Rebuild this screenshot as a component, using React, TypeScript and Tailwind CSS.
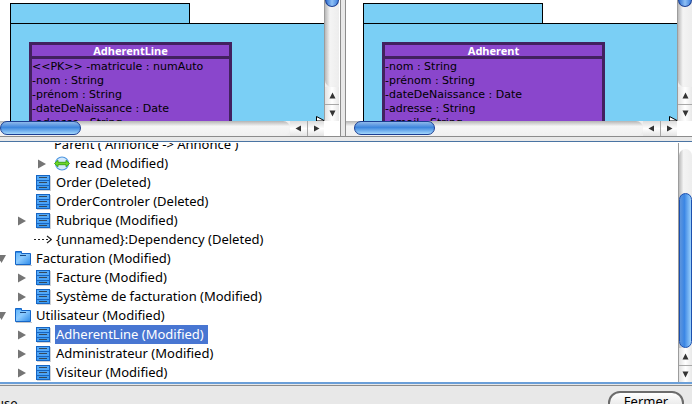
import React from "react";

type IconKind = "class" | "package" | "association" | "dependency";

interface TreeItem {
  label: string;
  level: number;
  icon?: IconKind;
  toggle?: "open" | "closed";
  selected?: boolean;
}

interface Diagram {
  name: string;
  boxWidth: string;
  attributes: string[];
  hTrack: string;
  offset: string;
}

const diagrams: Diagram[] = [
  {
    name: "AdherentLine",
    boxWidth: "w-[203px]",
    attributes: [
      "<<PK>> -matricule : numAuto",
      "-nom : String",
      "-prénom : String",
      "-dateDeNaissance : Date",
      "-adresse : String",
    ],
    hTrack: "pl-0",
    offset: "pl-[10px]",
  },
  {
    name: "Adherent",
    boxWidth: "w-[223px]",
    attributes: [
      "-nom : String",
      "-prénom : String",
      "-dateDeNaissance : Date",
      "-adresse : String",
      "-email : String",
    ],
    hTrack: "pl-2",
    offset: "pl-[17px]",
  },
];

const tree: TreeItem[] = [
  { label: "Parent ( Annonce -> Annonce )", level: 2 },
  { label: "read (Modified)", level: 2, icon: "association", toggle: "closed" },
  { label: "Order (Deleted)", level: 1, icon: "class" },
  { label: "OrderControler (Deleted)", level: 1, icon: "class" },
  { label: "Rubrique (Modified)", level: 1, icon: "class", toggle: "closed" },
  { label: "{unnamed}:Dependency (Deleted)", level: 1, icon: "dependency" },
  { label: "Facturation (Modified)", level: 0, icon: "package", toggle: "open" },
  { label: "Facture (Modified)", level: 1, icon: "class", toggle: "closed" },
  { label: "Système de facturation (Modified)", level: 1, icon: "class", toggle: "closed" },
  { label: "Utilisateur (Modified)", level: 0, icon: "package", toggle: "open" },
  { label: "AdherentLine (Modified)", level: 1, icon: "class", toggle: "closed", selected: true },
  { label: "Administrateur (Modified)", level: 1, icon: "class", toggle: "closed" },
  { label: "Visiteur (Modified)", level: 1, icon: "class", toggle: "closed" },
];

// left padding + width of the disclosure slot, per level
const levelPad = ["pl-0", "pl-4", "pl-9"];
const toggleWidth = ["w-[15px]", "w-5", "w-[18px]"];

function ClassIcon() {
  return (
    <svg width="15" height="16" viewBox="0 0 15 16" shapeRendering="crispEdges">
      <rect x="1" y="1" width="14" height="15" fill="#cfd2d6" />
      <rect x="0" y="0" width="14" height="15" fill="#1565c4" />
      <rect x="1" y="1" width="12" height="4" fill="#55aaf8" />
      <rect x="1" y="6" width="12" height="4" fill="#4da4f6" />
      <rect x="1" y="11" width="12" height="3" fill="#3f9cf2" />
      <rect x="3" y="2" width="8" height="1" fill="#36495c" />
      <rect x="3" y="7" width="8" height="1" fill="#36495c" />
      <rect x="3" y="12" width="8" height="1" fill="#36495c" />
    </svg>
  );
}

function PackageIcon() {
  return (
    <svg width="17" height="15" viewBox="0 0 17 15">
      <defs>
        <linearGradient id="pkg" x1="0" y1="0" x2="1" y2="1">
          <stop offset="0" stopColor="#5fb4fb" />
          <stop offset="0.45" stopColor="#8ccbff" />
          <stop offset="1" stopColor="#2f8be8" />
        </linearGradient>
      </defs>
      <path d="M1 14.5h16" stroke="#c4c8cc" />
      <path d="M0.5 13.5v-13h6v2h9v11z" fill="url(#pkg)" stroke="#1566c8" />
      <path d="M1 1.5h5" stroke="#2f8be8" />
      <path d="M5 4.5h6" stroke="#1d4a80" />
    </svg>
  );
}

function AssociationIcon() {
  return (
    <svg width="16" height="15" viewBox="0 0 16 15">
      <circle cx="8" cy="7.5" r="6.5" fill="#d4e9fb" stroke="#4f97e0" strokeWidth="1.2" />
      <path
        d="M0.500 7.500L4 4.300V6.300H12V4.300L15.500 7.500L12 10.700V8.700H4V10.700Z"
        fill="#6fd62a"
        stroke="#35a012"
        strokeWidth="0.9"
      />
    </svg>
  );
}

function DependencyIcon() {
  return (
    <svg width="18" height="9" viewBox="0 0 18 9">
      <path d="M0 4.5h17" stroke="#222" strokeDasharray="2 2" />
      <path d="M13 1l4.500 3.500L13 8" fill="none" stroke="#222" strokeWidth="1.200" />
    </svg>
  );
}

function TreeIcon({ kind }: { kind: IconKind }) {
  if (kind === "class") return <ClassIcon />;
  if (kind === "package") return <PackageIcon />;
  if (kind === "association") return <AssociationIcon />;
  return <DependencyIcon />;
}

function Arrow({ dir }: { dir: "up" | "down" | "left" | "right" }) {
  const paths = {
    up: "M4.500 1.500L7.500 7.500H1.500Z",
    down: "M4.500 7.500L7.500 1.500H1.500Z",
    left: "M1.500 4.500L7 1.500V7.500Z",
    right: "M7.500 4.500L2 1.500V7.500Z",
  };
  return (
    <svg width="9" height="9" viewBox="0 0 9 9">
      <path d={paths[dir]} fill="#333" />
    </svg>
  );
}

const vTrack = "bg-linear-to-r from-[#b9b9b9] via-[#f4f4f4] via-35% to-[#ededed]";
const vButton =
  "flex h-[17px] shrink-0 items-center justify-center bg-linear-to-r from-[#e2e2e2] via-white to-[#e8e8e8]";
const hButton =
  "flex w-[17px] shrink-0 items-center justify-center bg-linear-to-b from-[#dcdcdc] via-white to-[#e4e4e4]";

function VScrollButtons() {
  return (
    <>
      <button aria-label="Scroll up" className={vButton}>
        <Arrow dir="up" />
      </button>
      <button aria-label="Scroll down" className={`${vButton} border-t border-[#a8a8a8]`}>
        <Arrow dir="down" />
      </button>
    </>
  );
}

function DiagramPane({ diagram }: { diagram: Diagram }) {
  return (
    <section className="flex min-w-0 flex-1 flex-col bg-white">
      <div className="flex h-[121px]">
        <div className={`relative flex min-w-0 flex-1 flex-col overflow-hidden pt-[3px] ${diagram.offset}`}>
          <div className="h-5 w-[180px] shrink-0 border border-b-0 border-black bg-[#7acff5]" />
          <div className="flex-1 border-t border-l border-black bg-[#7acff5] pt-[18px] pl-[18px]">
            <div className={`border-[3px] border-[#42215f] bg-[#8a46cc] text-[11px] ${diagram.boxWidth}`}>
              <h2 className="border-b-[3px] border-[#42215f] text-center leading-[11px] font-bold text-white">
                {diagram.name}
              </h2>
              <ul className="pt-px font-['Lucida_Grande','DejaVu_Sans',sans-serif]">
                {diagram.attributes.map((attr) => (
                  <li key={attr} className="leading-[14px] whitespace-nowrap">
                    {attr}
                  </li>
                ))}
              </ul>
            </div>
          </div>
          <svg className="absolute right-0 bottom-0" width="8" height="5" viewBox="0 0 8 5">
            <path d="M0.500 5V0.500L8 4.500V5Z" fill="#fff" stroke="#000" />
          </svg>
        </div>
        <div className="flex w-[15px] flex-col border-l border-[#9c9c9c] bg-[#eee]">
          <div className={`flex-1 overflow-hidden rounded-b-[7px] ${vTrack}`}>
            <div className="h-[7px] rounded-b-full border border-t-0 border-[#1b3f94] bg-linear-to-r from-[#2f6fd0] via-[#8fc0f5] to-[#3d7fdc]" />
          </div>
          <VScrollButtons />
        </div>
      </div>
      <div className="flex h-[15px] bg-[#eee]">
        <div
          className={`min-w-0 flex-1 rounded-r-[7px] bg-linear-to-b from-[#b4b4b4] via-[#f6f6f6] via-35% to-[#f0f0f0] ${diagram.hTrack}`}
        >
          <div className="h-[14px] w-[81px] rounded-full border border-[#1b3f94] bg-linear-to-b from-[#8fb9ea] via-[#3d86dd] via-45% to-[#a2d6fb]" />
        </div>
        <button aria-label="Scroll left" className={hButton}>
          <Arrow dir="left" />
        </button>
        <button aria-label="Scroll right" className={`${hButton} border-l border-[#a8a8a8]`}>
          <Arrow dir="right" />
        </button>
        <div className="w-[15px] bg-white" />
      </div>
    </section>
  );
}

function TreeRow({ item }: { item: TreeItem }) {
  return (
    <li className={`flex h-[19px] items-center ${levelPad[item.level]}`}>
      <span className={`flex shrink-0 ${toggleWidth[item.level]} ${item.level > 0 ? "pl-0.5" : ""}`}>
        {item.toggle === "closed" && (
          <button aria-label={`Expand ${item.label}`}>
            <svg width="8" height="10" viewBox="0 0 8 10">
              <path d="M0 0.500L8 5L0 9.500Z" fill="#757575" />
            </svg>
          </button>
        )}
        {item.toggle === "open" && (
          <button aria-label={`Collapse ${item.label}`}>
            <svg width="6" height="8" viewBox="3 0 6 8">
              <path d="M0 0H9L4.500 8Z" fill="#757575" />
            </svg>
          </button>
        )}
      </span>
      {item.icon && (
        <span
          className={`flex shrink-0 items-center ${item.icon === "dependency" ? "-ml-0.5 w-[21px]" : item.level === 1 ? "w-[19px]" : "w-5"}`}
        >
          <TreeIcon kind={item.icon} />
        </span>
      )}
      <span
        className={`leading-[19px] whitespace-nowrap ${item.icon ? "px-px" : ""} ${item.selected ? "bg-[#4876d2] pr-1 text-white" : ""}`}
      >
        {item.label}
      </span>
    </li>
  );
}

export default function App() {
  return (
    <div className="flex h-screen flex-col overflow-hidden bg-[#e8e8e8] font-['Lucida_Grande','Noto_Sans',sans-serif] text-[13px] text-black">
      <div className="grid grid-cols-[341fr_347fr] gap-1 border-b border-[#8c8c8c]">
        <div className="flex min-w-0 border-r border-[#8c8c8c] bg-white pr-px">
          <DiagramPane diagram={diagrams[0]} />
        </div>
        <div className="flex min-w-0 border-l border-[#8c8c8c]">
          <DiagramPane diagram={diagrams[1]} />
        </div>
      </div>

      <main className="mt-1 flex min-h-0 flex-1 border-t border-b-2 border-t-[#4a74a3] border-b-[#6b9fd8] bg-white pt-px">
        <div className="min-w-0 flex-1 overflow-hidden">
          <ul className="-mt-2">
            {tree.map((item) => (
              <TreeRow key={item.label} item={item} />
            ))}
          </ul>
        </div>
        <div className="flex w-[14px] flex-col border-l border-[#9c9c9c] pt-1.5">
          <div className={`flex flex-1 flex-col rounded-t-full pt-11 ${vTrack}`}>
            <div className="flex-1 rounded-full border border-[#1b4fae] bg-linear-to-r from-[#5c94dc] via-[#3a86e4] via-40% to-[#9ad0fb]" />
          </div>
          <VScrollButtons />
        </div>
      </main>

      <footer className="mt-px flex h-[19px] shrink-0 items-start justify-between overflow-hidden border-t border-[#8c8c8c] pt-[5px] pr-2">
        <span className="-ml-1 pt-1 leading-4">use</span>
        <button className="flex h-6 w-[76px] shrink-0 justify-center rounded-full border-2 border-[#6c6c6c] bg-linear-to-b from-white to-[#dcdcdc] leading-4">
          Fermer
        </button>
      </footer>
    </div>
  );
}
